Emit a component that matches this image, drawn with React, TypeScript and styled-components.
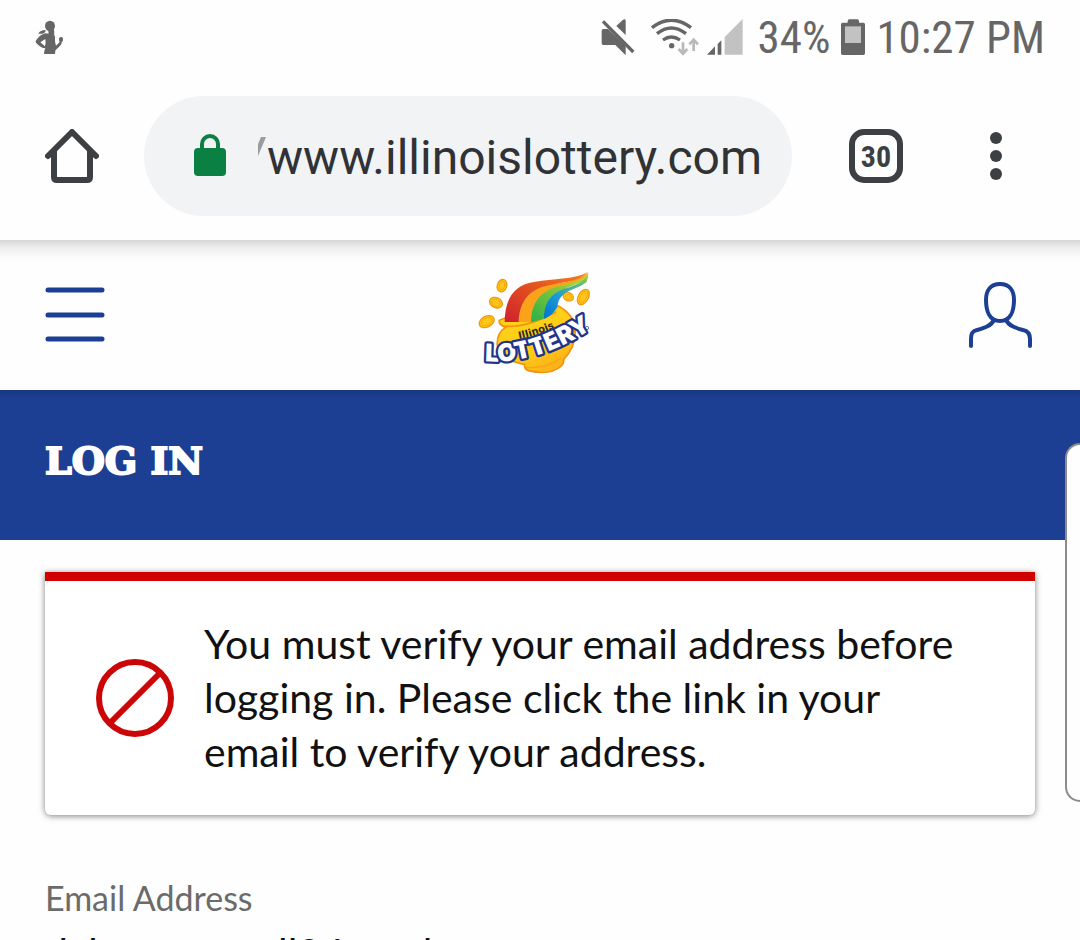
import React from "react";
import styled, { createGlobalStyle } from "styled-components";

const navy = "#1c3f94";
const chrome = "#3c4043";
const statusGrey = "#666666";
const bodyFont = `Lato, "Open Sans", sans-serif`;
const systemFont = `Roboto, "Liberation Sans", sans-serif`;

const GlobalStyle = createGlobalStyle`
  *, *::before, *::after { box-sizing: border-box; }
  html { overflow: hidden; }
  body { margin: 0; background: #fefefe; color: #111; font-family: ${bodyFont}; }
  button { border: 0; padding: 0; background: none; color: inherit; font: inherit; cursor: pointer; }
  svg { display: block; }
`;

const Screen = styled.div`
  position: relative;
  height: 100vh;
  overflow: hidden;
`;

const StatusBar = styled.div`
  display: flex;
  align-items: center;
  justify-content: space-between;
  height: 76px;
  padding: 0 35px 0 34px;
  color: ${statusGrey};
  font-family: "Roboto Condensed", "Liberation Sans Narrow", ${systemFont};
  font-size: 45px;
  line-height: 78px;
`;

const StatusGroup = styled.div`
  display: flex;
  align-items: center;
  gap: 11px;
`;

const NetworkIcons = styled.div`
  display: flex;
  gap: 8px;
  margin: 0 3px 0 5px;
`;

const BrowserBar = styled.div`
  display: flex;
  align-items: center;
  height: 164px;
  padding: 0 0 4px 36px;
  color: ${chrome};
  font-family: ${systemFont};
`;

const BarButton = styled.button<{ $width: number }>`
  display: flex;
  flex: none;
  align-items: center;
  justify-content: center;
  width: ${(p) => p.$width}px;
  height: 72px;
`;

const AddressPill = styled.div`
  display: flex;
  flex: 1;
  align-items: center;
  gap: 32px;
  min-width: 0;
  height: 120px;
  margin: 0 48px 0 36px;
  padding: 0 24px 0 50px;
  border-radius: 60px;
  background: #f1f3f5;
`;

const AddressField = styled.div`
  display: flex;
  flex: 1;
  align-items: center;
  min-width: 0;
`;

const AddressInput = styled.input`
  flex: 1;
  min-width: 0;
  padding: 2px 0 0;
  border: 0;
  outline: 0;
  background: none;
  color: #303236;
  font-family: ${systemFont};
  font-size: 48px;
`;

const TabCount = styled.span`
  display: flex;
  align-items: center;
  justify-content: center;
  width: 54px;
  height: 54px;
  border: 6px solid ${chrome};
  border-radius: 15px;
  font-family: "Roboto Condensed", "Liberation Sans Narrow", ${systemFont};
  font-size: 30px;
  font-weight: 700;
`;

const SiteHeader = styled.header`
  display: grid;
  grid-template-columns: 1fr auto 1fr;
  align-items: center;
  height: 150px;
  padding: 0 45px;
  background: linear-gradient(#d6d6d6, #eeeeee 8px, #fafafa 16px, #fefefe 24px);
  color: ${navy};
`;

const MenuButton = styled.button`
  justify-self: start;
`;

const AccountButton = styled.button`
  justify-self: end;
`;

const LogoLink = styled.a`
  display: block;
`;

const TitleBand = styled.div`
  display: flex;
  align-items: center;
  height: 150px;
  padding: 0 45px 8px;
  background: linear-gradient(#183780, ${navy} 10px);
`;

const Title = styled.h1`
  margin: 0;
  color: #fff;
  font-family: "DejaVu Serif", serif;
  font-size: 38px;
  font-weight: 700;
  line-height: 48px;
  -webkit-text-stroke: 2px #fff;
`;

const Content = styled.main`
  padding: 32px 45px 0;
`;

const Alert = styled.div`
  display: flex;
  align-items: center;
  gap: 30px;
  padding: 36px 72px 36px 51px;
  border-top: 9px solid #d00000;
  border-radius: 0 0 6px 6px;
  background: #fff;
  box-shadow: 0 1px 6px rgba(0, 0, 0, 0.5);

  svg { flex: none; }
`;

const AlertText = styled.p`
  flex: 1;
  margin: 0;
  font-size: 41px;
  line-height: 54px;
`;

const Field = styled.div`
  display: flex;
  flex-direction: column;
  padding-top: 62px;
`;

const FieldLabel = styled.label`
  color: #6b6b6b;
  font-size: 34px;
  line-height: 42px;
`;

const FieldInput = styled.input`
  width: 100%;
  height: 66px;
  padding: 0;
  border: 0;
  outline: 0;
  background: none;
  color: #111;
  font-family: ${bodyFont};
  font-size: 41px;
`;

const EdgePanel = styled.aside`
  position: absolute;
  top: 443px;
  right: 0;
  width: 15px;
  height: 359px;
  border: 2px solid #8c8c8c;
  border-right: 0;
  border-radius: 15px 0 0 15px;
  background: #fefefe;
`;

const RunnerIcon = () => (
  <svg width="30" height="36" viewBox="0 0 90 108" fill="#666">
    <ellipse cx="48" cy="18" rx="15" ry="16" />
    <path d="M43 28l17-1 1 16-17 2z" />
    <path d="M13 41q5-11 22-11l-1 5q-5 8-13 6z" />
    <path d="M34 40q11 2 22-1 9 8 7 19-1 8 3 19l11-11-2-6q-1-8 6-9 6-1 6 6 1 8-5 12l1 2q-9 12-18 19-2 4-2 12H30q1-12 4-17Q20 84 6 68q-3-4 1-8Q18 44 34 40zm0 17L19 67l14 12q3-9 1-22z" />
  </svg>
);

const MutedIcon = () => (
  <svg width="34" height="38" viewBox="0 4 102 114" fill="#666">
    <path d="M7 34h14l53 50v29L43 82H7q-5 0-5-5V39q0-5 5-5z" />
    <path d="M66 6q8-4 8 3v43L46 25z" />
    <path d="M12 4l91 92" stroke="#fefefe" strokeWidth="7" />
    <path d="M6 11l91 92" stroke="#666" strokeWidth="10" />
  </svg>
);

const WifiIcon = () => (
  <svg width="48" height="38" viewBox="0 4 144 114" fill="none" stroke="#666" strokeWidth="10">
    <path d="M3 30q58-45 117 0M18 48q43-34 87 0M36 67q25-18 51 0" />
    <circle cx="62" cy="84" r="8" fill="#666" stroke="none" />
    <g stroke="#b9b9b9" strokeWidth="8">
      <path d="M96 74v32M83 94l13 14 13-14M128 100V68M115 80l13-14 13 14" />
    </g>
  </svg>
);

const SignalIcon = () => (
  <svg width="36" height="38" viewBox="0 7 108 114">
    <path d="M0 114l24-25v25zM32 82l11-11v43H32z" fill="#666" />
    <path d="M53 61L107 7v107H53z" fill="#c2c2c2" />
  </svg>
);

const BatteryIcon = () => (
  <svg width="24" height="38" viewBox="0 9 72 114">
    <path d="M5 20h15v-5q0-5 5-5h24q5 0 5 5v5h13q5 0 5 5v87q0 5-5 5H5q-5 0-5-5V25q0-5 5-5z" fill="#666" />
    <path d="M12 31h48v50H12z" fill="#c2c2c2" />
  </svg>
);

const HomeIcon = () => (
  <svg width="54" height="54" viewBox="0 0 54 54" fill="none" stroke={chrome} strokeWidth="6">
    <path d="M9 22v26q0 3 3 3h30q3 0 3-3V22" />
    <path d="M3 27L27 3l24 24" strokeLinecap="round" strokeLinejoin="round" />
  </svg>
);

const LockIcon = () => (
  <svg width="32" height="44" viewBox="0 1 32 44">
    <path d="M8 18v-7a8 8 0 0 1 16 0v7" fill="none" stroke="#0b8043" strokeWidth="4" />
    <rect y="15" width="32" height="28" rx="4" fill="#0b8043" />
  </svg>
);

const SchemeSlash = () => (
  <svg width="9" height="48" viewBox="0 0 9 48">
    <path d="M3 5h5L0 24V12z" fill="#9a9c9f" />
  </svg>
);

const MoreIcon = () => (
  <svg width="12" height="48" viewBox="0 0 12 48" fill={chrome}>
    <circle cx="6" cy="6" r="6" />
    <circle cx="6" cy="24" r="6" />
    <circle cx="6" cy="42" r="6" />
  </svg>
);

const MenuIcon = () => (
  <svg width="60" height="56" viewBox="0 0 60 56" stroke={navy} strokeWidth="5" strokeLinecap="round">
    <path d="M3 3h54M3 28h54M3 52h54" />
  </svg>
);

const AccountIcon = () => (
  <svg width="66" height="68" viewBox="1 0 66 68" fill="none" stroke={navy} strokeWidth="4" strokeLinecap="round">
    <path d="M32 3c10 0 14 7 14 16 0 10-3 21-14 21S18 29 18 19C18 10 22 3 32 3z" />
    <path d="M26 39c-3 6-10 8-17 10-5 1-6 4-6 9v7M38 39c3 6 10 8 17 10 5 1 7 4 7 9v7" />
  </svg>
);

const BlockedIcon = () => (
  <svg width="78" height="78" viewBox="0 0 78 78" fill="none" stroke="#cc0606" strokeWidth="6">
    <circle cx="39" cy="39" r="36" />
    <path d="M14 64l50-50" />
  </svg>
);

const Coin = ({ x, y, rx, ry, turn }: { x: number; y: number; rx: number; ry: number; turn: number }) => (
  <g transform={`translate(${x} ${y}) rotate(${turn})`} stroke="#f0980f">
    <ellipse rx={rx} ry={ry} fill="#ffd216" strokeWidth="4" />
    <ellipse rx={rx - 6} ry={ry - 5} fill="#ffc61a" strokeWidth="2" />
  </g>
);

const LotteryLogo = () => (
  <svg width="150" height="130" viewBox="15 -30 450 390" role="img" aria-label="Illinois Lottery">
    <defs>
      <linearGradient id="red" x1="0" y1="1" x2="1" y2="0">
        <stop offset="0" stopColor="#cf202f" />
        <stop offset="0.5" stopColor="#e2501f" />
        <stop offset="1" stopColor="#f58220" />
      </linearGradient>
      <linearGradient id="green" x1="0" y1="1" x2="1" y2="0">
        <stop offset="0" stopColor="#2bb04a" />
        <stop offset="1" stopColor="#c4d92e" />
      </linearGradient>
      <linearGradient id="blue" x1="0" y1="1" x2="1" y2="0">
        <stop offset="0" stopColor="#0072ce" />
        <stop offset="0.4" stopColor="#1c9ad6" />
        <stop offset="1" stopColor="#8ccb4b" />
      </linearGradient>
      <linearGradient id="pot" x1="0" y1="0" x2="0.6" y2="1">
        <stop offset="0" stopColor="#ffd51a" />
        <stop offset="0.7" stopColor="#ffcc16" />
        <stop offset="1" stopColor="#fcb219" />
      </linearGradient>
      <path id="word" d="M75 303 C180 311 290 280 420 190" />
      <path id="state" d="M177 237 Q235 225 300 196" />
    </defs>
    <Coin x={126} y={77} rx={14} ry={19} turn={18} />
    <Coin x={108} y={128} rx={20} ry={15} turn={25} />
    <Coin x={80} y={185} rx={24} ry={16} turn={-28} />
    <Coin x={325} y={110} rx={16} ry={12} turn={25} />
    <Coin x={370} y={111} rx={15} ry={25} turn={30} />
    <path
      d="M118 181q-3 13 18 21-27 18-24 55 5 35 57 50l26 7q-4 13 10 18 65 16 99-14 9-10 7-20 40-40 34-97-5-41-57-67 8-12-2-18-10 1-20 8z"
      fill="url(#pot)"
      stroke="#f0930f"
      strokeWidth="5"
    />
    <path d="M132 199q70 4 157-44" fill="none" stroke="#f0930f" strokeWidth="5" />
    <path d="M198 322q60 5 105-28" fill="none" stroke="#f7a314" strokeWidth="4" />
    <path d="M134 186C135 130 152 76 222 66C285 54 335 61 385 36L352 62C280 68 202 87 184 186z" fill="url(#red)" />
    <path d="M176 187C178 124 207 90 258 78C310 64 346 68 385 38L380 55C290 85 230 90 222 185z" fill="#faa21b" />
    <path d="M214 187C212 128 244 93 290 80C335 70 365 61 385 42L379 59C310 91 270 90 258 175z" fill="url(#green)" />
    <path d="M252 176C253 124 275 96 324 83C350 75 372 62 385 46L380 66C351 91 296 88 292 142q-16 27-40 34z" fill="url(#blue)" />
    <text fontFamily="DejaVu Sans, sans-serif" fontWeight="700" fontSize="30" fill="#2b2a1c">
      <textPath href="#state">Illinois</textPath>
    </text>
    <text
      fontFamily="Inter, Liberation Sans, sans-serif"
      fontWeight="900"
      fontSize="73"
      fill="#fff"
      stroke="#22338b"
      strokeWidth="14"
      strokeLinejoin="round"
      paintOrder="stroke"
    >
      <textPath href="#word">LOTTERY</textPath>
    </text>
    <circle cx="381" cy="204" r="5" fill="none" stroke="#22338b" strokeWidth="2" />
  </svg>
);

export default function App() {
  return (
    <>
      <GlobalStyle />
      <Screen>
        <StatusBar>
          <RunnerIcon />
          <StatusGroup>
            <MutedIcon />
            <NetworkIcons>
              <WifiIcon />
              <SignalIcon />
            </NetworkIcons>
            <span>34%</span>
            <BatteryIcon />
            <span>10:27 PM</span>
          </StatusGroup>
        </StatusBar>
        <BrowserBar>
          <BarButton $width={72} aria-label="Home">
            <HomeIcon />
          </BarButton>
          <AddressPill>
            <LockIcon />
            <AddressField>
              <SchemeSlash />
              <AddressInput aria-label="Address" defaultValue="www.illinoislottery.com" />
            </AddressField>
          </AddressPill>
          <BarButton $width={72} aria-label="Open tabs">
            <TabCount>30</TabCount>
          </BarButton>
          <BarButton $width={168} aria-label="More options">
            <MoreIcon />
          </BarButton>
        </BrowserBar>
        <SiteHeader>
          <MenuButton aria-label="Menu">
            <MenuIcon />
          </MenuButton>
          <LogoLink href="#home">
            <LotteryLogo />
          </LogoLink>
          <AccountButton aria-label="Account">
            <AccountIcon />
          </AccountButton>
        </SiteHeader>
        <TitleBand>
          <Title>LOG IN</Title>
        </TitleBand>
        <Content>
          <Alert role="alert">
            <BlockedIcon />
            <AlertText>
              You must verify your email address before logging in. Please click the link in your email to verify your
              address.
            </AlertText>
          </Alert>
          <Field>
            <FieldLabel htmlFor="email">Email Address</FieldLabel>
            <FieldInput id="email" type="email" defaultValue="dabrownmcell94@aol.com" />
          </Field>
        </Content>
        <EdgePanel />
      </Screen>
    </>
  );
}
